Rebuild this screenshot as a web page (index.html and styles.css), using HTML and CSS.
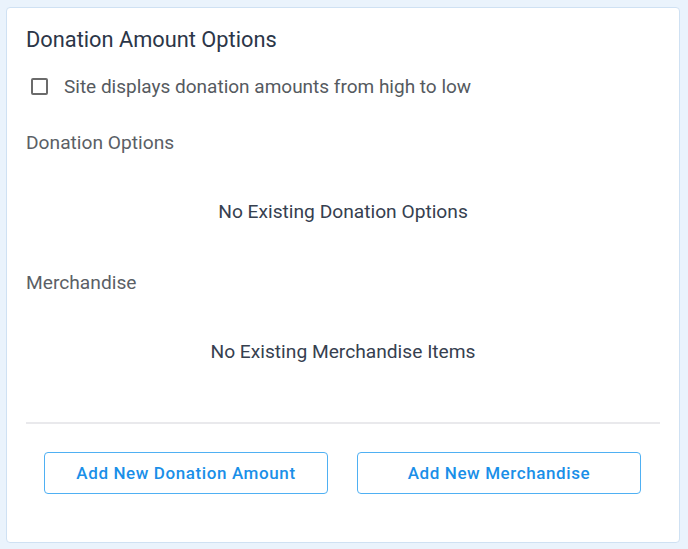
FILE: index.html
```html
<!DOCTYPE html>
<html>
<head>
<meta charset="utf-8">
<link rel="stylesheet" href="styles.css">
</head>
<body>
<div class="card">
  <h2 class="title">Donation Amount Options</h2>
  <label class="check-row">
    <span class="checkbox"></span>
    <span class="check-label">Site displays donation amounts from high to low</span>
  </label>
  <div class="section-label">Donation Options</div>
  <div class="empty">No Existing Donation Options</div>
  <div class="section-label section-gap">Merchandise</div>
  <div class="empty">No Existing Merchandise Items</div>
  <hr class="divider">
  <div class="actions">
    <button class="btn">Add New Donation Amount</button>
    <button class="btn">Add New Merchandise</button>
  </div>
</div>
</body>
</html>
```

FILE: styles.css
```css
html, body {
  margin: 0;
  padding: 0;
  background: #eaf3fc;
  font-family: Roboto, "Liberation Sans", sans-serif;
}
body {
  padding: 7px 0 0 6px;
}
.card {
  box-sizing: border-box;
  width: 674px;
  height: 536px;
  background: #fff;
  border: 1px solid #cfe1f3;
  border-radius: 4px;
  padding: 0 19px 0 19px;
}
.title {
  margin: 19px 0 0 0;
  font-size: 21.8px;
  font-weight: 400;
  color: #2b3648;
  line-height: 26px;
}
.check-row {
  display: flex;
  align-items: center;
  margin-top: 23px;
  padding-left: 5px;
  height: 20px;
}
.checkbox {
  box-sizing: border-box;
  width: 17px;
  height: 17px;
  border: 2px solid #6b6b6b;
  border-radius: 2px;
  margin-right: 16px;
}
.check-label {
  font-size: 19px;
  color: #555a60;
}
.section-label {
  font-size: 19.2px;
  color: #5b5f66;
  line-height: 22px;
  margin-top: 36px;
}
.section-gap {
  margin-top: 49px;
}
.empty {
  font-size: 19.2px;
  color: #36404f;
  text-align: center;
  line-height: 22px;
  margin-top: 47px;
}
.divider {
  border: 0;
  border-top: 2px solid #e9e9ec;
  margin: 59px 0 0 0;
  height: 0;
}
.actions {
  display: flex;
  justify-content: space-between;
  padding: 0 19px 0 18px;
  margin-top: 28px;
}
.btn {
  box-sizing: border-box;
  width: 284px;
  height: 42px;
  background: #fff;
  border: 1.5px solid #4fb0f3;
  border-radius: 4px;
  color: #1a8fe8;
  font-family: Roboto, "Liberation Sans", sans-serif;
  font-size: 17px;
  font-weight: 500;
  letter-spacing: 0.6px;
}
```
